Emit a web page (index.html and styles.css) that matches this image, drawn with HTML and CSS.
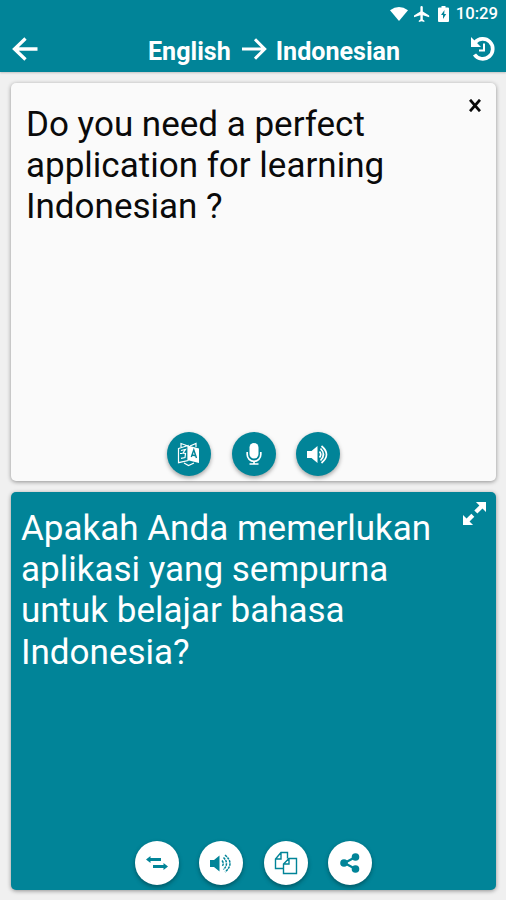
FILE: index.html
```html
<!DOCTYPE html>
<html lang="en">
<head>
  <meta charset="UTF-8">
  <title>English - Indonesian Translator</title>
  <link rel="stylesheet" href="styles.css">
</head>
<body>

  <header class="header">
    <div class="status-bar">
      <svg width="18" height="14" viewBox="0 0 18 14"><path d="M0 3.2Q9-3 18 3.2L9 14Z" fill="currentColor"/></svg>
      <svg class="plane" width="16" height="16" viewBox="3 2 18 20"><path d="M21 16v-2l-8-5V3.5a1.500 1.500 0 0 0-3 0V9l-8 5v2l8-2.500V19l-2 1.500V22l3.500-1 3.500 1v-1.500L13 19v-5.500z" fill="currentColor"/></svg>
      <svg class="battery" width="11" height="16" viewBox="0 0 11 16"><path d="M3.500 0h4v1.500H10q1 0 1 1V15q0 1-1 1H1q-1 0-1-1V2.500q0-1 1-1h2.500Z" fill="currentColor"/><path d="M6.500 4 3 9h2v4l3.200-5H6.200Z" fill="#018498"/></svg>
      <span class="clock">10:29</span>
    </div>
    <div class="toolbar">
      <svg class="back" width="26" height="24" viewBox="0 0 26 24" fill="none" stroke="currentColor" stroke-width="3.300"><path d="M25.500 12H2.500M13.500 1.500 2.500 12l11 10.500"/></svg>
      <h1 class="title">
        <span>English</span>
        <svg width="25" height="22" viewBox="0 0 25 22" fill="none" stroke="currentColor" stroke-width="3"><path d="M0 11h22.500M13 1.300 22.700 11 13 20.700"/></svg>
        <span>Indonesian</span>
      </h1>
      <svg class="history" width="26" height="26" viewBox="0 0 26 26" fill="none" stroke="currentColor"><path d="M5 6.500A10 10 0 1 1 4.500 18.500" stroke-width="3.700"/><path d="M1 1v10h10Z" fill="currentColor" stroke="none"/><path d="M14 7.500v7H9" stroke-width="2"/></svg>
    </div>
  </header>

  <main class="cards">
    <section class="card source">
      <p class="text">Do you need a perfect<br>application for learning<br>Indonesian ?</p>
      <svg class="corner close" width="12" height="13" viewBox="0 0 12 13" fill="none" stroke="currentColor" stroke-width="2.800"><path d="M1 .8 11 12.200M11 .8 1 12.200"/></svg>
      <div class="actions">
        <button class="round">
          <svg width="24" height="26" viewBox="0 0 24 26"><path d="M4 6V2.500l7 2.500M13 5l6-2.500V6M1.500 7.500 11 4.500v15l-9.500 2.200Z" fill="none" stroke="currentColor" stroke-width="1.200"/><path d="M11 4.500 22 7.500V22l-11-2.800Z" fill="currentColor"/><path d="m14.300 16 2.500-7 2.700 8M15.200 14l3.500.8" fill="none" stroke="#018498" stroke-width="1.400"/><path d="M4 9.500 8.500 8.400 6 12l2.500.5-.5 4-4 .8M3 12.500h2M7 22l4.500 2.500L17 22" fill="none" stroke="currentColor" stroke-width="1.200"/></svg>
        </button>
        <button class="round">
          <svg width="16" height="24" viewBox="0 0 16 24"><rect x="3.500" y="1" width="9" height="15.500" rx="4.500" fill="currentColor"/><path d="M1.200 10v2.500a6.800 6.800 0 0 0 13.600 0V10M8 19v3M3.500 22h9" fill="none" stroke="currentColor" stroke-width="1.700"/></svg>
        </button>
        <button class="round">
          <svg width="22" height="19" viewBox="0 0 22 19"><path d="M0 6h4.500l6-5v17l-6-5H0Z" fill="currentColor"/><path d="M12.500 6.500q2.500 3 0 6M13.500 3.500q6 6 0 12M14.500 1q10 8.500 0 17" fill="none" stroke="currentColor" stroke-width="1.700"/></svg>
        </button>
      </div>
    </section>

    <section class="card result">
      <p class="text">Apakah Anda memerlukan<br>aplikasi yang sempurna<br>untuk belajar bahasa<br>Indonesia?</p>
      <svg class="corner expand" width="23" height="23" viewBox="0 0 24 24"><path d="M13.500 0H24v10.500l-3.700-3.700-5.300 5.300-3.200-3.200 5.300-5.300ZM0 13.500V24h10.500l-3.700-3.700 5-5-3.100-3.100-5 5Z" fill="currentColor"/></svg>
      <div class="actions">
        <button class="round">
          <svg width="22" height="14" viewBox="0 0 22 14"><path d="M0 3.500 4.500 0v2H15v3H4.500V7ZM22 10.500 17.500 7v2H7v3h10.500V14Z" fill="currentColor"/></svg>
        </button>
        <button class="round">
          <svg width="22" height="19" viewBox="0 0 22 19"><path d="M0 6h4l5.500-4.500v16L4 13H0Z" fill="currentColor"/><path d="M12 6.500q2.500 3 0 6M13.500 3.500q6 6 0 12M15 1q10 8.500 0 17" fill="none" stroke="currentColor" stroke-width="1.500" stroke-dasharray="2.500 .8"/></svg>
        </button>
        <button class="round">
          <svg width="24" height="24" viewBox="0 0 24 24" fill="none" stroke="currentColor" stroke-width="1.400"><path d="M9 17.500H1.500V8L7 1.500h6.500v6M1.500 8H7V1.500M9.500 22.500V13L15 7.500h7.500v15ZM9.500 13H15V7.500"/></svg>
        </button>
        <button class="round">
          <svg width="20" height="20" viewBox="0 0 20 20"><path d="M15.500 4 4.500 10l11 6" fill="none" stroke="currentColor" stroke-width="2.300"/><circle cx="15.500" cy="4" r="3.800" fill="currentColor"/><circle cx="4" cy="10" r="3.800" fill="currentColor"/><circle cx="15.500" cy="16" r="3.800" fill="currentColor"/></svg>
        </button>
      </div>
    </section>
  </main>

</body>
</html>
```
FILE: styles.css
```css
* {
  box-sizing: border-box;
}

body {
  font-family: Roboto, sans-serif;
  background: #f0f0f0;
  margin: 0;
  height: 900px;
  overflow: hidden;
}

svg {
  display: block;
  flex: none;
}

.header {
  height: 72px;
  background: #018498;
  color: #fff;
  box-shadow: 0 1px 2px rgba(0, 0, 0, 0.2);
}

.status-bar {
  height: 27px;
  display: flex;
  justify-content: flex-end;
  align-items: center;
  padding-right: 8px;
}

.plane {
  margin-left: 6px;
}

.battery {
  margin: 0 7px 0 8px;
}

.clock {
  font-size: 16.7px;
  font-weight: 500;
  line-height: 27px;
}

.toolbar {
  height: 44px;
  display: flex;
  align-items: center;
  padding: 0 10px 0 12px;
}

.title {
  display: flex;
  align-items: center;
  gap: 10px;
  margin: 5px auto 0 110px;
  font-size: 25.1px;
  font-weight: 700;
  line-height: 30px;
}

.title svg {
  margin: -5px -1px 0 1px;
}

.cards {
  display: flex;
  flex-direction: column;
  gap: 11px;
  padding: 11px 10px 0 11px;
}

.card {
  position: relative;
  height: 398px;
  display: flex;
  flex-direction: column;
  justify-content: space-between;
  border-radius: 5px;
  box-shadow: 0 1px 4px rgba(0, 0, 0, 0.4);
}

.source {
  background: #fafafa;
  color: #0a0a0a;
  padding: 21px 15px 5px;
}

.result {
  background: #018498;
  color: #fff;
  padding: 16px 10px 5px;
}

.text {
  margin: 0;
  font-size: 35px;
  line-height: 41.2px;
  white-space: nowrap;
}

.corner {
  position: absolute;
}

.close {
  top: 16px;
  right: 15px;
}

.expand {
  top: 10px;
  right: 10px;
}

.actions {
  display: flex;
  justify-content: center;
  gap: 20.6px;
}

.round {
  width: 44px;
  height: 44px;
  padding: 0;
  border: none;
  border-radius: 50%;
  display: flex;
  align-items: center;
  justify-content: center;
  background: #018498;
  color: #fff;
  box-shadow: 0 2px 4px rgba(0, 0, 0, 0.35);
}

.result .round {
  background: #fff;
  color: #018498;
}
```
